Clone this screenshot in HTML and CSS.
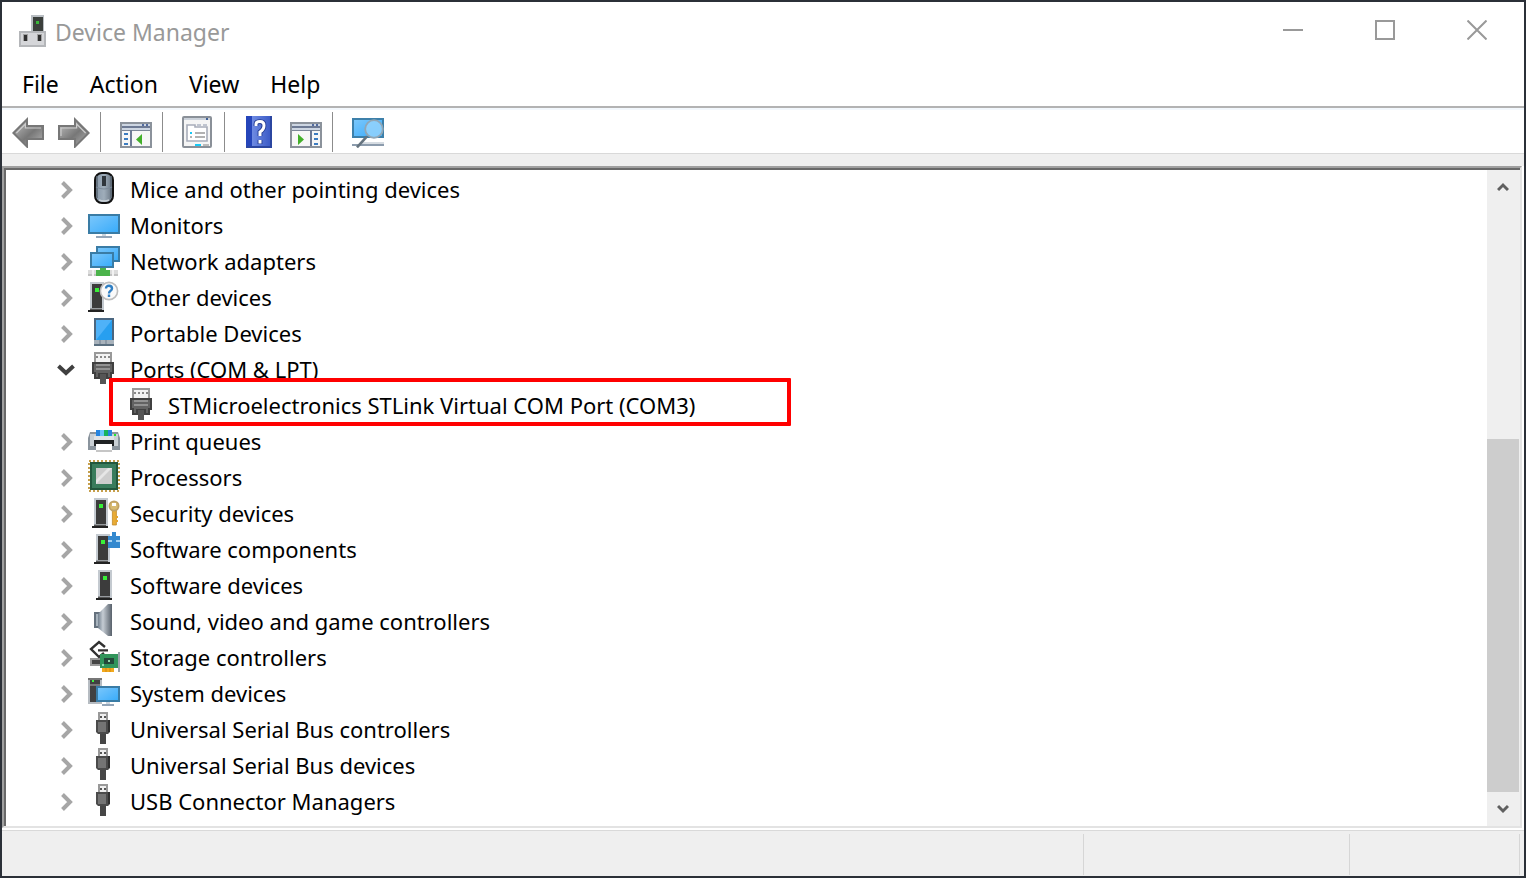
FILE: index.html
```html
<!DOCTYPE html>
<html lang="en">
<head>
<meta charset="utf-8">
<title>Device Manager</title>
<link rel="stylesheet" href="styles.css">
</head>
<body>
<svg class="defs" aria-hidden="true">
  <defs>
    <linearGradient id="blue" x1="0" y1="0" x2="1" y2="1"><stop offset="0" stop-color="#7cc8fb"/><stop offset=".5" stop-color="#5ab9fb"/><stop offset="1" stop-color="#36abfa"/></linearGradient>
    <linearGradient id="steel"><stop offset="0" stop-color="#73818f"/><stop offset=".35" stop-color="#c5ccd3"/><stop offset="1" stop-color="#58616b"/></linearGradient>
    <linearGradient id="mouse"><stop offset="0" stop-color="#8797a8"/><stop offset=".5" stop-color="#9fadba"/><stop offset="1" stop-color="#64707d"/></linearGradient>
    <linearGradient id="arrow" x1="0" y1="0" x2="1" y2="1"><stop offset="0" stop-color="#c4c4c4"/><stop offset=".55" stop-color="#777"/><stop offset="1" stop-color="#b5b5b5"/></linearGradient>
    <linearGradient id="book"><stop offset="0" stop-color="#2545ba"/><stop offset=".22" stop-color="#2545ba"/><stop offset=".23" stop-color="#6f8be2"/><stop offset="1" stop-color="#3656c4"/></linearGradient>
    <symbol id="chev" viewBox="0 0 14 20"><path d="M2.500 2.500 10 10l-7.500 7.500" fill="none" stroke="#a6a6a6" stroke-width="4"/></symbol>
    <symbol id="open" viewBox="0 0 18 14"><path d="M1.500 3 9 10l7.500-7" fill="none" stroke="#404040" stroke-width="4"/></symbol>
    <symbol id="tower" viewBox="0 0 8 16"><path d="M1 1h7v14H1z" fill="#c4cad0"/><path d="M2 2h5v12H2z" fill="#3c3c3c"/><path d="M1 14.300h6v1H1z" fill="#555"/><path d="M0 15h8v1H0z" fill="#222"/><path d="M3.500 4h2v2h-2z" fill="#38f038"/></symbol>
    <symbol id="i-mouse" viewBox="0 0 16 16"><rect x="3.500" y=".5" width="9" height="15" rx="3.500" fill="url(#mouse)" stroke="#111"/><path d="M4.500 2v11M11.500 2v11" stroke="#5c6975" stroke-width=".8"/><path d="M4 7.500q4 2 8 0" stroke="#7b8998" stroke-width=".6" fill="none"/><path d="M7 2h2v5H7z" fill="#2f353b"/><path d="M5.500 14q2.500 1 5 0" fill="none" stroke="#c9d0d6" stroke-width=".7"/></symbol>
    <symbol id="i-monitor" viewBox="0 0 16 16"><path d="M.5 3.500h15v9H.5z" fill="url(#blue)" stroke="#3a7ca5"/><path d="M7 13h2v1H7z" fill="#ccd5de"/><path d="M4 14h8v1H4z" fill="#93a5b8"/></symbol>
    <symbol id="i-net" viewBox="0 0 16 16"><path d="M4.500 1.500h11v7h-11z" fill="url(#blue)" stroke="#3a7ca5"/><path d="M1.500 4.500h11v7h-11z" fill="url(#blue)" stroke="#3a7ca5"/><path d="M0 13h15v2H0z" fill="#dcdcdc"/><path d="M0 15h15v1H0z" fill="#c2c2c2"/><path d="M6 12h3v1h2v3H4v-3h2z" fill="#4bb34b"/><path d="M2 13h1v3H2zM12 13h1v3h-1z" fill="#f2f2f2"/></symbol>
    <symbol id="i-other" viewBox="0 0 16 16"><use href="#tower" width="8" height="16"/><circle cx="10.500" cy="5.500" r="4.300" fill="#fafafa" stroke="#bdbdbd" stroke-width=".8"/><path d="M9 4.300C9 2.300 12 2.500 12 4.200 12 5.500 10.500 5.200 10.500 6.700M10.500 7.300v1.200" fill="none" stroke="#2f7fc4" stroke-width="1.200"/></symbol>
    <symbol id="i-portable" viewBox="0 0 16 16"><path d="M3.500 1.500h9v13h-9z" fill="#279ff0" stroke="#4a6680"/><path d="M4 2h8l-8 10z" fill="#4fb2f8"/><path d="M3 12h10v2.500H3z" fill="#a8b2bb"/><path d="M6 12v2.500M9 12v2.500" stroke="#718090" stroke-width=".5"/><path d="M3 14h10v1H3z" fill="#5a6f80"/></symbol>
    <symbol id="i-port" viewBox="0 0 16 16"><path d="M3.500.5h8V6h-8z" fill="#f2f2f2" stroke="#999"/><path d="M4 2h1v1H4zM6 2h1v1H6zM8 2h1v1H8zM10 2h1v1h-1z" fill="#888"/><path d="M2.500 5.500h10v5h-1V13h-2v-2h-4v2h-2v-2.500h-1z" fill="#626262" stroke="#404040"/><path d="M4 6.500h7M4 8.500h7" stroke="#a2a2a2" stroke-width=".7"/><path d="M6 11h3v5H6z" fill="#555"/></symbol>
    <symbol id="i-print" viewBox="0 0 16 16"><path d="M4 3h8v3H4z" fill="#2684e0"/><path d="M6 3h2v3H6z" fill="#69c4fc"/><path d="M8 3h2v3H8z" fill="#19b45b"/><path d="M1 4h3v2h8V4h3l1 3v6H0V7z" fill="#8a949d"/><path d="M1 5h3v6H1zM12 5h3v6h-3z" fill="#c9d0d5"/><path d="M3 6h10v2H3z" fill="#dfe3e6"/><path d="M3 8h10v3H3z" fill="#1f2224"/><path d="M4 10h8v3.500H4z" fill="#fff"/><path d="M4 13h8v1H4z" fill="#c6c6c6"/><path d="M13 5h1v1h-1z" fill="#20e830"/></symbol>
    <symbol id="i-cpu" viewBox="0 0 16 16"><path d="M.5.5h15v15H.5z" fill="none" stroke="#c6a04d" stroke-dasharray="1 1"/><path d="M1.500 1.500h13v13h-13z" fill="#397c5c" stroke="#22573d"/><path d="M4 4h8v8H4z" fill="#cdcdcd"/><path d="M4 10 10 4h2L4 12z" fill="#e6e6e6"/></symbol>
    <symbol id="key" viewBox="0 0 6 13"><path d="M2.200 5h2v7.500h-2z" fill="#e9ab35" stroke="#c08a2c" stroke-width=".4"/><circle cx="3" cy="3" r="2.300" fill="#d8bb72" stroke="#c0a264" stroke-width=".9"/><path d="M2 1.500h2v1.500H2z" fill="#fff"/><path d="M4 8h1v1H4zM4 10h1v1H4z" fill="#e3a32d"/></symbol>
    <symbol id="i-security" viewBox="0 0 16 16"><use href="#tower" x="2" width="8" height="16"/><use href="#key" x="10" y="2" width="6" height="13"/></symbol>
    <symbol id="i-component" viewBox="0 0 16 16"><use href="#tower" x="3" width="8" height="16"/><path d="M10 2h2V0h2v2h2v6h-6z" fill="#3489cf"/><path d="M10 4h2v1h-2zM14 4h2v1h-2z" fill="#a5d2f2"/></symbol>
    <symbol id="i-software" viewBox="0 0 16 16"><use href="#tower" x="4" width="8" height="16"/></symbol>
    <symbol id="i-sound" viewBox="0 0 16 16"><path d="M3 4h3v8H3z" fill="#65717d"/><path d="M5 5 10 0h2v16h-2l-5-4z" fill="url(#steel)"/><path d="M4 5h1v6H4z" fill="#a7b3bd"/></symbol>
    <symbol id="i-storage" viewBox="0 0 16 16"><path d="M1 9h5v4H1z" fill="#999"/><path d="M2 10h4v2H2z" fill="#444"/><path d="M8.500 3.500 5.500 1 1.500 4.500 5.500 8.500 8 6.500M5 5.200h5" fill="none" stroke="#303030" stroke-width="1.200"/><path d="M6 7h9v7H6z" fill="#31955b"/><path d="M8 9h5v3H8z" fill="#24483a"/><path d="M10 10h1v1h-1zM7 12h1v1H7z" fill="#91d9aa"/><path d="M7 14h6v2H7z" fill="#f2a91d"/><path d="M9 14v2M11 14v2" stroke="#c8800e" stroke-width=".4"/><path d="M15 6h1v10h-1z" fill="#9aa3aa"/></symbol>
    <symbol id="i-system" viewBox="0 0 16 16"><path d="M0 1h7v13H0z" fill="#b6bcc2"/><path d="M1 1.500h5V13H1z" fill="#414141"/><path d="M0 1h7v1H0zM1 4h5v1H1z" fill="#777"/><path d="M2 2h1v1H2z" fill="#3df33d"/><path d="M4.500 5.500h11v7h-11z" fill="url(#blue)" stroke="#3a7ca5"/><path d="M9 13h2v1H9z" fill="#ccd5de"/><path d="M7 14h6v1H7z" fill="#93a5b8"/></symbol>
    <symbol id="i-usb" viewBox="0 0 16 16"><path d="M5.500.5h4V5h-4z" fill="#eee" stroke="#999"/><path d="M6 2h1v1H6zM8 2h1v1H8z" fill="#555"/><path d="M4 4h7v6l-1 1H5l-1-1z" fill="#4b4b4b"/><path d="M5 5h4v5H5z" fill="#747474"/><path d="M10 4h1v6h-1z" fill="#303030"/><path d="M6 11h3v5H6z" fill="#464646"/></symbol>
    <symbol id="panel" viewBox="0 0 16 13"><path d="M.5.5h15v12H.5z" fill="#f7f7f7" stroke="#8b929b"/><path d="M1 1h14v3H1z" fill="#cdd6e2"/><path d="M1 2h14v1H1z" fill="#6d7a94"/><path d="M11 1h1v1h-1zM13 1h1v1h-1z" fill="#536b9f"/><path d="M1 4h14v.5H1z" fill="#7c8798"/></symbol>
  </defs>
</svg>

<main class="window">
  <header class="titlebar">
    <svg class="app-icon" viewBox="0 0 27 32"><path d="M12 0h13v17H12z" fill="#b9bec3"/><path d="M14 2h10v14H14z" fill="#3b3f3c"/><path d="M17 6h3v3h-3z" fill="#39b839"/><path d="M0 16h27v16H0z" fill="#b4b6b9"/><path d="M2 18h23v12H2z" fill="#d5d6d9"/><path d="M4 19h5v7H4zM18 19h5v7h-5z" fill="#a0a0a0"/><path d="M5 20h3v6H5zM19 20h3v6h-3z" fill="#303030"/></svg>
    <h1 class="title">Device Manager</h1>
    <div class="captions">
      <button class="caption" aria-label="Minimize"><svg viewBox="0 0 20 20"><path d="M0 10h20" /></svg></button>
      <button class="caption" aria-label="Maximize"><svg viewBox="0 0 20 20"><path d="M1 1h18v18H1z"/></svg></button>
      <button class="caption" aria-label="Close"><svg viewBox="0 0 20 20"><path d="m.5.5 19 19m0-19-19 19"/></svg></button>
    </div>
  </header>

  <nav class="menubar">
    <button class="menu">File</button>
    <button class="menu">Action</button>
    <button class="menu">View</button>
    <button class="menu">Help</button>
  </nav>

  <div class="toolbar" role="toolbar" aria-label="Tools">
    <div class="group nav-group">
      <button class="tool" aria-label="Back"><svg viewBox="0 0 16 16"><path d="M.7 8.500 7.500 1.700V5h8v6.500h-8v3.800z" fill="url(#arrow)" stroke="#777"/><path d="M2.200 8.500 6.700 4v2h7.800" fill="none" stroke="#ccc" stroke-width=".6"/></svg></button>
      <button class="tool" aria-label="Forward"><svg viewBox="0 0 16 16"><path d="M15.300 8.500 8.500 1.700V5h-8v6.500h8v3.800z" fill="url(#arrow)" stroke="#777"/><path d="M13.800 8.500 9.300 4v2H1.500v4" fill="none" stroke="#ccc" stroke-width=".6"/></svg></button>
    </div>
    <div class="group tree-group">
      <button class="tool" aria-label="Show/Hide Console Tree"><svg viewBox="0 0 16 16"><use href="#panel" y="3" width="16" height="13"/><path d="M5 7h1v8H5z" fill="#6d7a94"/><path d="M2 9h2M2 11.500h2M2 14h2" stroke="#3d7cc0"/><path d="M11 9v5.500L8 11.700z" fill="#43b02a"/></svg></button>
    </div>
    <div class="group prop-group">
      <button class="tool" aria-label="Properties"><svg viewBox="0 0 16 16"><rect x="1" y=".5" width="14" height="15" rx=".5" fill="#f5f5f5" stroke="#8a9098"/><path d="M1.500 1h13v1h-13z" fill="#cbd2db"/><path d="M12.500 1h1v1h-1z" fill="#3f5f96"/><path d="M3 4.500h4v1h6v7H3z" fill="#fff" stroke="#a8adba" stroke-width=".8"/><path d="M8 4h2v1H8zM11 4h2v1h-2z" fill="#c0c5d0"/><path d="M4.500 8h1v1h-1z" fill="#18c8f5"/><path d="M7 8.500h5M7 10.500h5M4.500 10.500h1" stroke="#999" stroke-width=".7"/><path d="M7 14h3v1H7z" fill="#18c8f5"/><path d="M11 14h3v1h-3z" fill="#bbb"/></svg></button>
    </div>
    <div class="group help-group">
      <button class="tool" aria-label="Help"><svg viewBox="0 0 16 16"><path d="M1 0h13v16H1z" fill="url(#book)"/><path d="M1 15h13v1H1zM13 0h1v16h-1z" fill="#2b46a0"/><path d="M6 5V4Q6 2.800 8 2.800T10 4.800 8 8v2M8 12v2" fill="none" stroke="#223b91" stroke-width="2.400"/><path d="M6 5V4Q6 2.800 8 2.800T10 4.800 8 8v2M8 12v1.700" fill="none" stroke="#fff" stroke-width="1.500"/></svg></button>
      <button class="tool" aria-label="Show/Hide Action Pane"><svg viewBox="0 0 16 16"><use href="#panel" y="3" width="16" height="13"/><path d="M10 7h1v8h-1z" fill="#6d7a94"/><path d="M12 9h2M12 11.500h2M12 14h2" stroke="#3d7cc0"/><path d="M4 9v5.500l3-2.800z" fill="#43b02a"/></svg></button>
    </div>
    <div class="group scan-group">
      <button class="tool" aria-label="Scan for hardware changes"><svg viewBox="0 0 16 16"><path d="M.5 1.500h15v9H.5z" fill="url(#blue)" stroke="#3d80aa"/><path d="M5 13h11v1H5z" fill="#d6dce2"/><path d="M0 14h16v1H0z" fill="#8c9cad"/><circle cx="11" cy="6.500" r="4.400" fill="#93d2fb" fill-opacity=".85" stroke="#91a6b5" stroke-width=".9"/><path d="m7.500 10.200-5 5.500" stroke="#66747f" stroke-width="1.300"/></svg></button>
    </div>
  </div>

  <div class="content">
    <div class="pane">
      <div class="client">
      <ul class="tree">
        <li class="row"><svg class="chev"><use href="#chev"/></svg><svg class="icon"><use href="#i-mouse"/></svg><span class="label">Mice and other pointing devices</span></li>
        <li class="row"><svg class="chev"><use href="#chev"/></svg><svg class="icon"><use href="#i-monitor"/></svg><span class="label">Monitors</span></li>
        <li class="row"><svg class="chev"><use href="#chev"/></svg><svg class="icon"><use href="#i-net"/></svg><span class="label">Network adapters</span></li>
        <li class="row"><svg class="chev"><use href="#chev"/></svg><svg class="icon"><use href="#i-other"/></svg><span class="label">Other devices</span></li>
        <li class="row"><svg class="chev"><use href="#chev"/></svg><svg class="icon"><use href="#i-portable"/></svg><span class="label">Portable Devices</span></li>
        <li class="row"><svg class="chev open"><use href="#open"/></svg><svg class="icon"><use href="#i-port"/></svg><span class="label">Ports (COM &amp; LPT)</span></li>
        <li class="row child"><svg class="icon"><use href="#i-port"/></svg><span class="label">STMicroelectronics STLink Virtual COM Port (COM3)</span><span class="highlight"></span></li>
        <li class="row"><svg class="chev"><use href="#chev"/></svg><svg class="icon"><use href="#i-print"/></svg><span class="label">Print queues</span></li>
        <li class="row"><svg class="chev"><use href="#chev"/></svg><svg class="icon"><use href="#i-cpu"/></svg><span class="label">Processors</span></li>
        <li class="row"><svg class="chev"><use href="#chev"/></svg><svg class="icon"><use href="#i-security"/></svg><span class="label">Security devices</span></li>
        <li class="row"><svg class="chev"><use href="#chev"/></svg><svg class="icon"><use href="#i-component"/></svg><span class="label">Software components</span></li>
        <li class="row"><svg class="chev"><use href="#chev"/></svg><svg class="icon"><use href="#i-software"/></svg><span class="label">Software devices</span></li>
        <li class="row"><svg class="chev"><use href="#chev"/></svg><svg class="icon"><use href="#i-sound"/></svg><span class="label">Sound, video and game controllers</span></li>
        <li class="row"><svg class="chev"><use href="#chev"/></svg><svg class="icon"><use href="#i-storage"/></svg><span class="label">Storage controllers</span></li>
        <li class="row"><svg class="chev"><use href="#chev"/></svg><svg class="icon"><use href="#i-system"/></svg><span class="label">System devices</span></li>
        <li class="row"><svg class="chev"><use href="#chev"/></svg><svg class="icon"><use href="#i-usb"/></svg><span class="label">Universal Serial Bus controllers</span></li>
        <li class="row"><svg class="chev"><use href="#chev"/></svg><svg class="icon"><use href="#i-usb"/></svg><span class="label">Universal Serial Bus devices</span></li>
        <li class="row"><svg class="chev"><use href="#chev"/></svg><svg class="icon"><use href="#i-usb"/></svg><span class="label">USB Connector Managers</span></li>
      </ul>
      <div class="scrollbar">
        <button class="scroll-btn" aria-label="Scroll up"><svg viewBox="0 0 12 10"><path d="m1 8 5-5 5 5"/></svg></button>
        <div class="track"><div class="thumb"></div></div>
        <button class="scroll-btn" aria-label="Scroll down"><svg viewBox="0 0 12 10"><path d="m1 2 5 5 5-5"/></svg></button>
      </div>
      </div>
    </div>
  </div>

  <footer class="statusbar">
    <div class="status wide"></div>
    <div class="status mid"></div>
    <div class="status small"></div>
  </footer>
</main>
</body>
</html>
```
FILE: styles.css
```css
* { box-sizing: border-box; }

body {
  margin: 0;
  height: 100vh;
  padding: 2px;
  background: #2b3038;
  font-family: "Noto Sans", "Open Sans", sans-serif;
  font-size: 22px;
  line-height: 30px;
  color: #000;
}

button {
  margin: 0;
  padding: 0;
  border: 0;
  background: none;
  font: inherit;
  color: inherit;
}

svg { display: block; flex: none; }

.defs { position: absolute; width: 0; height: 0; }

.window {
  display: flex;
  flex-direction: column;
  height: 100%;
  background: #fff;
}

.titlebar {
  display: flex;
  align-items: center;
  height: 60px;
  padding: 0 1px 0 17px;
  gap: 9px;
}

.app-icon { width: 27px; height: 32px; margin-bottom: 2px; }

.title {
  flex: 1;
  margin: 0;
  font-size: 23px;
  font-weight: 400;
  color: #999;
}

.captions { display: flex; align-self: stretch; }

.caption {
  display: grid;
  place-items: center;
  width: 92px;
  padding-bottom: 4px;
}

.caption svg {
  width: 20px;
  height: 20px;
  fill: none;
  stroke: #999;
  stroke-width: 2px;
}

.menubar {
  display: flex;
  gap: 31px;
  height: 46px;
  padding: 0 20px;
  border-bottom: 2px solid #b3b3b3;
  font-size: 23px;
}

.menu { height: 44px; }

.toolbar {
  display: flex;
  height: 46px;
  padding: 2px 0 1px 10px;
  border-top: 2px solid #f3f8fd;
  border-bottom: 1px solid #d9d9d9;
}

.group { display: flex; align-items: flex-start; height: 40px; padding-top: 4px; border-right: 1px solid #8c8c8c; }
.nav-group { gap: 14px; width: 89px; }
.tree-group { width: 62px; padding-left: 19px; }
.prop-group { width: 62px; padding-left: 18px; }
.help-group { width: 108px; padding-left: 19px; gap: 14px; }
.scan-group { padding-left: 19px; border: 0; }

.tool svg { width: 32px; height: 32px; }

.content {
  flex: 1;
  display: flex;
  min-height: 0;
  padding: 12px 2px 2px 0;
  background: linear-gradient(#efefef 12px, #fff 12px);
}

.pane {
  flex: 1;
  display: flex;
  min-width: 0;
  border: 2px solid;
  border-color: #a0a0a0 #e3e3e3 #e3e3e3 #a0a0a0;
}

.client {
  flex: 1;
  display: flex;
  min-width: 0;
  border-top: 2px solid #696969;
  border-left: 2px solid #696969;
}

.tree {
  flex: 1;
  margin: 0;
  padding: 2px 0 0 54px;
  list-style: none;
  overflow: hidden;
}

.row {
  position: relative;
  display: flex;
  align-items: center;
  height: 36px;
  white-space: nowrap;
}

.chev { width: 14px; height: 20px; margin-right: 14px; }
.chev.open { width: 18px; height: 14px; margin: 0 13px 0 -3px; }
.icon { width: 32px; height: 32px; margin: 0 10px 4px 0; }
.label { margin-bottom: 2px; }
.child { padding-left: 66px; }

.highlight {
  position: absolute;
  top: -10px;
  left: 49px;
  width: 682px;
  height: 48px;
  border: 4px solid #f00;
  border-radius: 1px;
}

.scrollbar {
  display: flex;
  flex-direction: column;
  width: 33px;
  background: #efefef;
}

.scroll-btn { display: grid; place-items: center; width: 32px; height: 34px; }
.scroll-btn svg { width: 12px; height: 10px; fill: none; stroke: #606060; stroke-width: 3px; }

.track { flex: 1; display: flex; align-items: flex-end; }
.thumb { width: 32px; height: 60%; background: #cdcdcd; }

.statusbar {
  display: flex;
  height: 46px;
  padding: 3px 4px 1px 0;
  border-top: 1px solid #d9d9d9;
  background: #efefef;
}

.status { border-right: 1px solid #d6d6d6; }
.wide { flex: 1; }
.mid { width: 266px; }
.small { width: 170px; }
```
